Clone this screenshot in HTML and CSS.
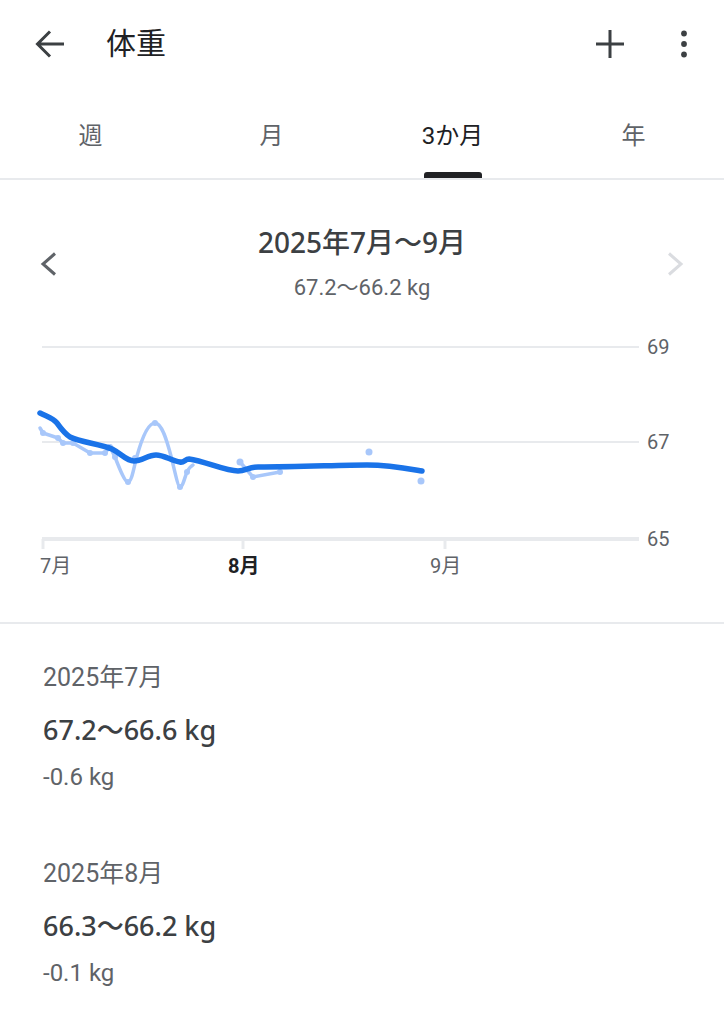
FILE: index.html
```html
<!DOCTYPE html>
<html lang="ja">
<head>
	<meta charset="UTF-8">
	<meta name="viewport" content="width=device-width, initial-scale=1.0">
	<title>体重</title>
	<link rel="stylesheet" href="styles.css">
</head>
<body>
	<header class="appbar">
		<button class="icon-btn back"><svg viewBox="0 0 32 32"><path d="M30 16H4M16 3.5L3.5 16L16 28.5"/></svg></button>
		<h1 class="title">体重</h1>
		<div class="spacer"></div>
		<button class="icon-btn add"><svg viewBox="0 0 32 32"><path d="M16 2V30M2 16H30"/></svg></button>
		<button class="icon-btn more"><svg viewBox="0 0 32 32"><circle cx="16" cy="4" r="3.3"/><circle cx="16" cy="16" r="3.3"/><circle cx="16" cy="28" r="3.3"/></svg></button>
	</header>

	<nav class="tabs">
		<div class="tab">週</div>
		<div class="tab">月</div>
		<div class="tab" data-active="1">3か月</div>
		<div class="tab">年</div>
	</nav>

	<section class="chart-card">
		<div class="range-nav">
			<button class="chev"><svg viewBox="0 0 24 24"><path d="M17 1.5L5 12L17 22.5"/></svg></button>
			<div class="range">
				<div class="range-title">2025年7月〜9月</div>
				<div class="range-sub">67.2〜66.2 kg</div>
			</div>
			<button class="chev" data-disabled="1"><svg viewBox="0 0 24 24"><path d="M7 1.5L19 12L7 22.5"/></svg></button>
		</div>

		<svg class="chart" viewBox="0 320 724 302">
			<!-- grid -->
			<line class="grid" x1="42" y1="347" x2="639" y2="347"/>
			<line class="grid" x1="42" y1="442" x2="639" y2="442"/>
			<line class="axis" x1="42" y1="539" x2="639" y2="539"/>
			<line class="tick" x1="43" y1="539" x2="43" y2="549"/>
			<line class="tick" x1="243" y1="539" x2="243" y2="549"/>
			<line class="tick" x1="445" y1="539" x2="445" y2="549"/>
			<text class="ylabel" x="647" y="354">69</text>
			<text class="ylabel" x="647" y="449">67</text>
			<text class="ylabel" x="647" y="546">65</text>
			<text class="xlabel" x="40" y="573">7月</text>
			<text class="xlabel" x="228" y="573" data-current="1">8月</text>
			<text class="xlabel" x="430" y="573">9月</text>

			<!-- raw readings -->
			<path class="raw" d="M40 428 L43 433 L58 438 L63 443 L73 443 L90 453 L105 453 L110 447 L115 457 C120 470, 125 482, 128 482 C132 482, 134 466, 137 456 C142 438, 148 423, 155 423 C162 423, 167 441, 171 456 C175 472, 178 487, 180 487 C183 487, 185 476, 187 472 C189 468, 191 466, 193 465"/>
			<path class="raw" d="M240 462 L253 477 L280 472"/>
			<g class="raw-dot">
				<circle cx="43" cy="433" r="3"/>
				<circle cx="58" cy="438" r="3"/>
				<circle cx="63" cy="443" r="3"/>
				<circle cx="73" cy="443" r="3"/>
				<circle cx="90" cy="453" r="3"/>
				<circle cx="105" cy="453" r="3"/>
				<circle cx="110" cy="447" r="3"/>
				<circle cx="115" cy="457" r="3"/>
				<circle cx="128" cy="482" r="3"/>
				<circle cx="135" cy="458" r="3"/>
				<circle cx="155" cy="423" r="3"/>
				<circle cx="180" cy="487" r="3"/>
				<circle cx="187" cy="472" r="3"/>
				<circle cx="240" cy="462" r="3.5"/>
				<circle cx="253" cy="477" r="3"/>
				<circle cx="280" cy="472" r="3"/>
				<circle cx="369" cy="452" r="3.5"/>
				<circle cx="421" cy="481" r="3.5"/>
			</g>

			<!-- trend -->
			<path class="trend" d="M40 413 C48 417, 53 418, 57 423 C62 430, 64 433, 70 437 C80 442, 100 444, 112 449 C122 454, 126 461, 134 461 C142 461, 148 455, 156 455 C164 455, 172 461, 180 462 C184 463, 185 459, 189 459 C205 461, 225 471, 238 471 C246 471, 248 467, 258 467 C300 467, 340 465, 367 465 C390 465, 410 469, 422 471"/>
		</svg>
	</section>

	<section class="months">
		<div class="month">
			<div class="month-label">2025年7月</div>
			<div class="month-range">67.2〜66.6 kg</div>
			<div class="month-delta">-0.6 kg</div>
		</div>
		<div class="month">
			<div class="month-label">2025年8月</div>
			<div class="month-range">66.3〜66.2 kg</div>
			<div class="month-delta">-0.1 kg</div>
		</div>
	</section>
</body>
</html>
```

FILE: styles.css
```css
* {
	margin: 0;
	padding: 0;
	box-sizing: border-box;
}
body {
	background-color: white;
	color: #202124;
	font-family: Roboto, "Noto Sans CJK JP", sans-serif;
	width: 724px;
	overflow: hidden;
}
button {
	border: unset;
	background: none;
	display: flex;
	align-items: center;
	justify-content: center;
}

/* App bar */
.appbar {
	height: 88px;
	display: flex;
	align-items: center;
	padding: 0 24px 0 34px;
}
.icon-btn svg {
	width: 32px;
	height: 32px;
	fill: none;
	stroke: #3c4043;
	stroke-width: 3;
}
.back {
	margin-right: 40px;
}
.title {
	font-size: 30px;
	font-weight: 400;
	color: #202124;
	line-height: 40px;
}
.spacer {
	flex-grow: 1;
}
.add {
	margin-right: 42px;
}
.more svg {
	stroke: none;
	fill: #3c4043;
	width: 32px;
	height: 28px;
}

/* Tabs */
.tabs {
	height: 92px;
	display: grid;
	grid-template-columns: repeat(4, 1fr);
	border-bottom: 2px solid #e8eaed;
}
.tab {
	font-size: 24px;
	color: #5f6368;
	display: flex;
	align-items: center;
	justify-content: center;
	position: relative;
}
.tab[data-active="1"] {
	color: #202124;
}
.tab[data-active="1"]::after {
	content: "";
	position: absolute;
	bottom: 0;
	left: 50%;
	width: 58px;
	margin-left: -29px;
	height: 6px;
	border-radius: 3px 3px 0 0;
	background-color: #202124;
}

/* Chart */
.range-nav {
	display: flex;
	align-items: center;
	padding: 44px 38px 0 38px;
}
.range {
	flex-grow: 1;
	display: flex;
	flex-direction: column;
	align-items: center;
}
.range-title {
	font-family: "Noto Sans", "Noto Sans CJK JP", sans-serif;
	font-size: 28px;
	font-weight: 500;
	line-height: 36px;
	color: #3c4043;
}
.range-sub {
	margin-top: 13px;
	font-size: 22px;
	line-height: 30px;
	color: #5f6368;
}
.chev svg {
	width: 24px;
	height: 24px;
	fill: none;
	stroke: #5f6368;
	stroke-width: 3;
}
.chev[data-disabled="1"] svg {
	stroke: #dadce0;
}
.chart {
	display: block;
	width: 724px;
	height: 302px;
	margin-top: 17px;
}
.grid {
	stroke: #e8eaed;
	stroke-width: 2;
}
.axis {
	stroke: #e8eaed;
	stroke-width: 4;
}
.tick {
	stroke: #e8eaed;
	stroke-width: 3;
}
.ylabel, .xlabel {
	font-family: Roboto, "Noto Sans CJK JP", sans-serif;
	font-size: 20px;
	fill: #5f6368;
}
.xlabel[data-current="1"] {
	font-weight: 700;
	fill: #202124;
}
.raw {
	fill: none;
	stroke: #a8c7fa;
	stroke-width: 3.5;
	stroke-linejoin: round;
	stroke-linecap: round;
}
.raw-dot {
	fill: #a8c7fa;
}
.trend {
	fill: none;
	stroke: #1a73e8;
	stroke-width: 5.5;
	stroke-linecap: round;
	stroke-linejoin: round;
}

/* Monthly list */
.months {
	border-top: 2px solid #e8eaed;
	padding: 39px 43px 0;
	display: flex;
	flex-direction: column;
	gap: 67px;
}
.month-label {
	font-size: 25px;
	line-height: 30px;
	color: #5f6368;
}
.month-range {
	margin-top: 20px;
	font-family: "Noto Sans", "Noto Sans CJK JP", sans-serif;
	font-size: 27px;
	font-weight: 500;
	line-height: 34px;
	color: #3c4043;
}
.month-delta {
	margin-top: 15px;
	font-size: 24px;
	line-height: 30px;
	color: #5f6368;
}
```
